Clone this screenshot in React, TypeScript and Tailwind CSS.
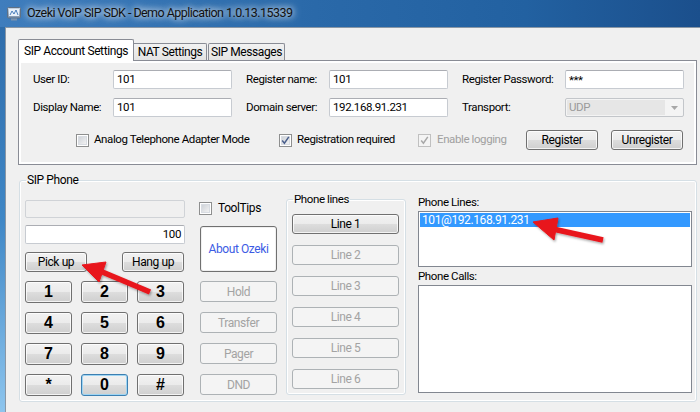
import React from "react";

const FONT = "font-['Segoe_UI','Roboto','Liberation_Sans',sans-serif]";

const BTN_NORMAL =
  "border-[#707070] bg-[linear-gradient(to_bottom,#f2f2f2_0%,#ebebeb_50%,#dddddd_50%,#cfcfcf_100%)] text-black shadow-[inset_0_0_0_1px_rgba(255,255,255,0.75)]";
const BTN_FOCUSED =
  "border-[#3c7fb1] bg-[linear-gradient(to_bottom,#f2f2f2_0%,#ebebeb_50%,#dddddd_50%,#cfcfcf_100%)] text-black shadow-[inset_0_0_0_1px_#9fd5f3]";
const BTN_DISABLED = "border-[#adb2b5] bg-[#f4f4f4] text-[#a3a3a3]";

function WinButton({
  children,
  className = "",
  disabled = false,
  focused = false,
}: {
  children: React.ReactNode;
  className?: string;
  disabled?: boolean;
  focused?: boolean;
}) {
  const look = disabled ? BTN_DISABLED : focused ? BTN_FOCUSED : BTN_NORMAL;
  return (
    <div
      className={`flex items-center justify-center border rounded-[3px] text-[12px] leading-none whitespace-nowrap select-none ${look} ${className}`}
    >
      {children}
    </div>
  );
}

function TextBox({
  value,
  className = "",
  right = false,
}: {
  value: string;
  className?: string;
  right?: boolean;
}) {
  return (
    <div
      className={`h-[19px] flex items-center px-[3px] bg-white border border-[#c7cbd1] border-t-[#abadb3] rounded-[2px] text-[11.5px] text-black ${
        right ? "justify-end" : ""
      } ${className}`}
    >
      {value}
    </div>
  );
}

function CheckBox({ checked = false, disabled = false }: { checked?: boolean; disabled?: boolean }) {
  return (
    <span
      className={`w-[13px] h-[13px] shrink-0 border flex items-center justify-center ${
        disabled ? "border-[#c0c0c0] bg-[#f4f4f4]" : "border-[#8e8f8f] bg-white"
      }`}
    >
      <span
        className={`w-[9px] h-[9px] flex items-center justify-center ${
          disabled
            ? "bg-[#f4f4f4]"
            : "bg-[linear-gradient(135deg,#cbcfd5,#f6f6f6)] shadow-[inset_0_0_0_1px_#d8dce2]"
        }`}
      >
        {checked && (
          <svg viewBox="0 0 9 9" className="w-[9px] h-[9px]">
            <path
              d="M1.2 4.6 L3.4 7.2 L7.8 0.8"
              fill="none"
              stroke={disabled ? "#a8a8a8" : "#4a5f8c"}
              strokeWidth="1.5"
            />
          </svg>
        )}
      </span>
    </span>
  );
}

function AppIcon() {
  return (
    <svg viewBox="0 0 14 14" className="w-[14px] h-[14px]">
      <defs>
        <linearGradient id="ic" x1="0" y1="0" x2="0" y2="1">
          <stop offset="0" stopColor="#c9d6e4" />
          <stop offset="1" stopColor="#7d93ad" />
        </linearGradient>
      </defs>
      <rect x="0.5" y="0.5" width="13" height="10.5" rx="1" fill="url(#ic)" stroke="#5e7085" />
      <rect x="2" y="2" width="10" height="7" fill="#e9f1fa" />
      <path d="M3 8 L5 4 L7 7 L9 3 L11 8" fill="none" stroke="#3b73b4" strokeWidth="0.9" />
      <rect x="4" y="11.5" width="6" height="2" fill="#7d93ad" />
    </svg>
  );
}

function Arrows() {
  return (
    <svg className="absolute inset-0 w-[700px] h-[412px] pointer-events-none" viewBox="0 0 700 412">
      <defs>
        <filter id="sh" x="-20%" y="-20%" width="140%" height="140%">
          <feDropShadow dx="1" dy="1.5" stdDeviation="1.2" floodColor="#000" floodOpacity="0.35" />
        </filter>
      </defs>
      <g filter="url(#sh)" fill="#e8141b" stroke="#e8141b">
        <line x1="100" y1="271" x2="150" y2="292" strokeWidth="5.5" />
        <polygon points="82,265 106,262 99,282" strokeWidth="1" strokeLinejoin="round" />
        <line x1="553" y1="229" x2="603" y2="240" strokeWidth="5.5" />
        <polygon points="533,222 558,218 554,240" strokeWidth="1" strokeLinejoin="round" />
      </g>
    </svg>
  );
}

export default function App() {
  const keys = ["1", "2", "3", "4", "5", "6", "7", "8", "9", "*", "0", "#"];

  return (
    <div className={`relative w-[700px] h-[412px] overflow-hidden bg-[#f0f0f0] text-black tracking-[-0.4px] ${FONT}`}>
      {/* title bar */}
      <div className="h-[27px] flex items-center bg-[linear-gradient(to_right,#3f7dbd,#2a69a9_45%,#2261a1_75%,#1b4f8c)]">
        <div className="ml-[7px] mt-[1px]">
          <AppIcon />
        </div>
        <span className="ml-[6px] text-[12.5px] tracking-[-0.55px] leading-none text-[#111] [text-shadow:0_0_6px_rgba(255,255,255,0.95),0_0_10px_rgba(255,255,255,0.8)]">
          Ozeki VoIP SIP SDK - Demo Application 1.0.13.15339
        </span>
      </div>

      <div className="flex h-[385px]">
        {/* window frame */}
        <div className="w-[5px] bg-[linear-gradient(to_bottom,#2f6dab,#3f87c6_50%,#8dc5ee)]" />

        {/* client area */}
        <div className="flex-1 border-l border-t border-[#8a97a5] pt-[10px] pl-[12px]">
          {/* tabs */}
          <div className="flex items-end h-[22px] relative z-10 text-[12px] whitespace-nowrap">
            <div className="w-[116px] h-[22px] mb-[-1px] bg-white border border-b-0 border-[#898c95] rounded-t-[2px] flex items-center justify-center">
              SIP Account Settings
            </div>
            <div className="w-[73px] h-[17px] border border-l-0 border-b-0 border-[#898c95] rounded-tr-[2px] bg-[linear-gradient(to_bottom,#f2f2f2,#e3e3e3)] flex items-center justify-center">
              NAT Settings
            </div>
            <div className="ml-[1px] w-[77px] h-[17px] border border-b-0 border-[#898c95] rounded-t-[2px] bg-[linear-gradient(to_bottom,#f2f2f2,#e3e3e3)] flex items-center justify-center">
              SIP Messages
            </div>
          </div>

          {/* tab page */}
          <div className="w-[679px] h-[105px] border border-[#898c95] bg-[#f0f0f0] shadow-[inset_0_0_0_2px_#ffffff] pt-[9px] pl-[14px] text-[11.5px] whitespace-nowrap">
            <div className="flex h-[19px] items-center">
              <span className="w-[80px]">User ID:</span>
              <TextBox value="101" className="w-[119px]" />
              <span className="ml-[14px] w-[83px]">Register name:</span>
              <TextBox value="101" className="w-[119px]" />
              <span className="ml-[14px] w-[103px]">Register Password:</span>
              <TextBox value="***" className="w-[119px] items-start pt-[1px] text-[9px]" />
            </div>
            <div className="flex h-[19px] items-center mt-[9px]">
              <span className="w-[80px]">Display Name:</span>
              <TextBox value="101" className="w-[119px]" />
              <span className="ml-[14px] w-[83px]">Domain server:</span>
              <TextBox value="192.168.91.231" className="w-[119px]" />
              <span className="ml-[14px] w-[103px]">Transport:</span>
              <div className="w-[119px] h-[19px] flex items-stretch border border-[#c3c6ca] rounded-[2px] bg-[#f4f4f4]">
                <div className="flex-1 m-[1px] mr-0 bg-[#e6e6e6] flex items-center px-[2px] text-[#9a9a9a]">UDP</div>
                <div className="w-[18px] flex items-center justify-center">
                  <svg viewBox="0 0 7 4" className="w-[7px] h-[4px]">
                    <polygon points="0,0 7,0 3.5,4" fill="#a7a7a7" />
                  </svg>
                </div>
              </div>
            </div>
            <div className="flex h-[20px] items-center mt-[13px] ml-[43px]">
              <div className="w-[203px] flex items-center">
                <CheckBox />
                <span className="ml-[5px]">Analog Telephone Adapter Mode</span>
              </div>
              <div className="w-[139px] flex items-center">
                <CheckBox checked />
                <span className="ml-[5px]">Registration required</span>
              </div>
              <div className="w-[108px] flex items-center">
                <CheckBox checked disabled />
                <span className="ml-[6px] text-[#a0a0a0]">Enable logging</span>
              </div>
              <WinButton className="w-[72px] h-[20px]">Register</WinButton>
              <WinButton className="ml-[13px] w-[72px] h-[20px]">Unregister</WinButton>
            </div>
          </div>

          {/* SIP Phone group */}
          <fieldset className="mt-[8px] ml-[1px] w-[678px] h-[229px] border border-[#d5dfe5] rounded-[3px] pl-[5px] pt-[5px] shadow-[inset_0_0_0_1px_#ffffff] text-[11.5px] whitespace-nowrap">
            <legend className="ml-[1px] px-[1px] leading-[14px] text-[12px]">SIP Phone</legend>
            <div className="flex items-start">
              {/* dial column */}
              <div className="w-[160px] mt-[8px]">
                <div className="h-[18px] border border-[#d0d3d7] rounded-[2px] bg-[#f0f0f0]" />
                <TextBox value="100" right className="mt-[7px] w-[160px]" />
                <div className="mt-[8px] flex justify-between pr-[1px]">
                  <WinButton className="w-[62px] h-[20px]">Pick up</WinButton>
                  <WinButton className="w-[62px] h-[20px]">Hang up</WinButton>
                </div>
                <div className="mt-[9px] grid grid-cols-[47px_47px_47px] gap-x-[9px] gap-y-[9px]">
                  {keys.map((k) => (
                    <WinButton
                      key={k}
                      focused={k === "0"}
                      className="h-[22px] text-[16px] tracking-normal font-bold font-['Liberation_Sans',Arial,sans-serif]"
                    >
                      {k}
                    </WinButton>
                  ))}
                </div>
              </div>

              {/* function column */}
              <div className="ml-[14px] w-[78px] mt-[9px]">
                <div className="h-[14px] flex items-center">
                  <CheckBox />
                  <span className="ml-[6px] text-[12px]">ToolTips</span>
                </div>
                <div className="ml-[1px] mt-[11px] w-[77px] h-[46px] border border-[#707070] rounded-[3px] bg-white shadow-[inset_0_0_0_1px_#f0f0f0] flex items-center justify-center text-[12px] text-[#3c5ce4]">
                  About Ozeki
                </div>
                <WinButton disabled className="ml-[1px] mt-[9px] w-[77px] h-[21px]">Hold</WinButton>
                <WinButton disabled className="ml-[1px] mt-[10px] w-[77px] h-[21px]">Transfer</WinButton>
                <WinButton disabled className="ml-[1px] mt-[10px] w-[77px] h-[21px]">Pager</WinButton>
                <WinButton disabled className="ml-[1px] mt-[10px] w-[77px] h-[21px]">DND</WinButton>
              </div>

              {/* phone lines group */}
              <fieldset className="ml-[9px] w-[120px] h-[203px] border border-[#d5dfe5] rounded-[3px] pl-[5px] pt-[8px] shadow-[inset_0_0_0_1px_#ffffff]">
                <legend className="ml-[1px] px-[1px] leading-[14px]">Phone lines</legend>
                <WinButton className="w-[107px] h-[20px]">Line 1</WinButton>
                <WinButton disabled className="mt-[11px] w-[107px] h-[20px]">Line 2</WinButton>
                <WinButton disabled className="mt-[11px] w-[107px] h-[20px]">Line 3</WinButton>
                <WinButton disabled className="mt-[11px] w-[107px] h-[20px]">Line 4</WinButton>
                <WinButton disabled className="mt-[11px] w-[107px] h-[20px]">Line 5</WinButton>
                <WinButton disabled className="mt-[11px] w-[107px] h-[20px]">Line 6</WinButton>
              </fieldset>

              {/* lists */}
              <div className="ml-[12px] w-[274px]">
                <div className="mt-[3px] leading-[14px]">Phone Lines:</div>
                <div className="mt-[2px] h-[56px] border border-[#828790] bg-white p-[1px]">
                  <div className="h-[14px] bg-[#3399ff] text-white text-[12px] leading-[14px] px-[2px]">101@192.168.91.231</div>
                </div>
                <div className="mt-[2px] leading-[14px]">Phone Calls:</div>
                <div className="mt-[2px] h-[108px] border border-[#828790] bg-white" />
              </div>
            </div>
          </fieldset>
        </div>
      </div>

      <Arrows />
    </div>
  );
}
